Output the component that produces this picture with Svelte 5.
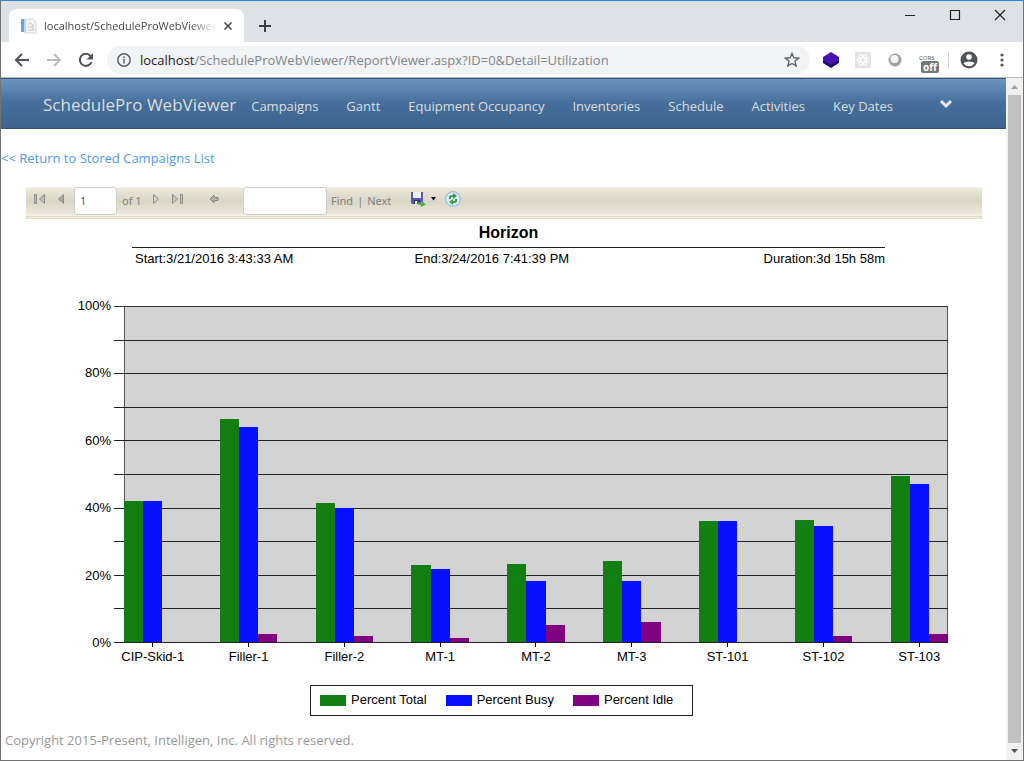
<script>
  let url = 'localhost/ScheduleProWebViewer/ReportViewer.aspx?ID=0&Detail=Utilization';
  let page = '1';
  let search = '';

  const links = [
    'Campaigns',
    'Gantt',
    'Equipment Occupancy',
    'Inventories',
    'Schedule',
    'Activities',
    'Key Dates'
  ];

  const series = [
    { name: 'Percent Total', key: 'total' },
    { name: 'Percent Busy', key: 'busy' },
    { name: 'Percent Idle', key: 'idle' }
  ];

  const equipment = [
    { name: 'CIP-Skid-1', total: 42, busy: 42, idle: 0 },
    { name: 'Filler-1', total: 66.3, busy: 64, idle: 2.4 },
    { name: 'Filler-2', total: 41.5, busy: 40, idle: 1.8 },
    { name: 'MT-1', total: 22.8, busy: 21.6, idle: 1.2 },
    { name: 'MT-2', total: 23.2, busy: 18.2, idle: 5 },
    { name: 'MT-3', total: 24, busy: 18.2, idle: 6 },
    { name: 'ST-101', total: 36, busy: 36, idle: 0 },
    { name: 'ST-102', total: 36.3, busy: 34.5, idle: 1.8 },
    { name: 'ST-103', total: 49.4, busy: 47, idle: 2.4 }
  ];

  const scale = [100, 80, 60, 40, 20, 0];
  const gridRows = Array(10);

  $: host = url.split('/')[0];
  $: path = url.slice(host.length);
</script>

<div class="window">
  <header class="tabs">
    <div class="tab">
      <svg width="16" height="16" viewBox="0 0 16 16">
        <path d="M4 1h8l3 3v11H4z" fill="#f1f2f4" stroke="#d5d8dc" />
        <path d="M0 1h4v13H0z" fill="#6aa5d6" />
        <path d="M3 1h2v13H3z" fill="#b9d6ec" />
        <path d="M7 7l2-2 3 2v5M7 9h5M7 12h6" fill="none" stroke="#c3c8ce" />
      </svg>
      <span class="title">localhost/ScheduleProWebViewer</span>
      <button aria-label="Close tab">
        <svg width="10" height="10" viewBox="0 0 10 10">
          <path d="M1.5 1.5l7 7M8.5 1.5l-7 7" stroke="#45494d" stroke-width="1.6" />
        </svg>
      </button>
    </div>
    <button class="new-tab" aria-label="New tab">
      <svg width="14" height="14" viewBox="0 0 14 14">
        <path d="M7 1v12M1 7h12" stroke="#3c4043" stroke-width="2" />
      </svg>
    </button>
    <div class="controls">
      <button aria-label="Minimize">
        <svg width="12" height="12" viewBox="0 0 12 12"><path d="M1 6.5h10" stroke="#222" /></svg>
      </button>
      <button aria-label="Maximize">
        <svg width="12" height="12" viewBox="0 0 12 12">
          <path d="M1.5 1.5h9v9h-9z" fill="none" stroke="#222" stroke-width="1.2" />
        </svg>
      </button>
      <button aria-label="Close">
        <svg width="12" height="12" viewBox="0 0 12 12">
          <path d="M1 1l10 10M11 1L1 11" stroke="#222" stroke-width="1.2" />
        </svg>
      </button>
    </div>
  </header>

  <div class="address">
    <div class="history">
      <button aria-label="Back">
        <svg width="16" height="16" viewBox="0 0 16 16">
          <path d="M15 8H2M8 2L2 8l6 6" fill="none" stroke="#50545a" stroke-width="2" />
        </svg>
      </button>
      <button aria-label="Forward">
        <svg width="16" height="16" viewBox="0 0 16 16">
          <path d="M1 8h13M8 2l6 6-6 6" fill="none" stroke="#babcbe" stroke-width="2" />
        </svg>
      </button>
      <button aria-label="Reload">
        <svg width="16" height="16" viewBox="0 0 16 16">
          <path d="M13.5 10A6 6 0 1 1 12.500 4" fill="none" stroke="#50545a" stroke-width="2" />
          <path d="M15 1v6.500H8.500z" fill="#50545a" />
        </svg>
      </button>
    </div>
    <div class="omnibox">
      <svg width="16" height="16" viewBox="0 0 16 16">
        <circle cx="8" cy="8" r="6.200" fill="none" stroke="#5f6368" stroke-width="1.5" />
        <path d="M8 7v4.500M8 4.300v1.700" stroke="#5f6368" stroke-width="1.5" />
      </svg>
      <span class="url"><b>{host}</b>{path}</span>
      <button aria-label="Bookmark this page">
        <svg width="16" height="16" viewBox="0 0 16 16">
          <path
            d="M8 1.500l1.900 4.300 4.700.4-3.600 3.100 1.100 4.600L8 11.500l-4.100 2.400 1.100-4.600L1.400 6.200l4.700-.4z"
            fill="none"
            stroke="#5f6368"
            stroke-width="1.4"
          />
        </svg>
      </button>
    </div>
    <div class="extensions">
      <svg width="16" height="16" viewBox="0 0 16 16">
        <path d="M0 7v4l8 5 8-5V7z" fill="#1d0a72" />
        <path d="M8 0l8 5v3l-8 5-8-5V5z" fill="#4712b0" />
      </svg>
      <svg width="16" height="16" viewBox="0 0 16 16">
        <path d="M0 0h16v16H0z" fill="#e4e4e4" />
        <g fill="none" stroke="#fff">
          <ellipse cx="8" cy="8" rx="6" ry="2.3" />
          <ellipse cx="8" cy="8" rx="6" ry="2.3" transform="rotate(60 8 8)" />
          <ellipse cx="8" cy="8" rx="6" ry="2.3" transform="rotate(120 8 8)" />
        </g>
      </svg>
      <svg width="16" height="16" viewBox="0 0 16 16">
        <circle cx="8" cy="8" r="6.500" fill="#a2a2a2" />
        <path d="M2 10a6.500 6.500 0 0 1 9-8 7 7 0 0 0-9 8z" fill="#ccc" />
        <circle cx="7.500" cy="7" r="4" fill="#f4f4f4" />
      </svg>
      <div class="cors">
        <span>CORS</span>
        <b>off</b>
      </div>
      <i></i>
      <svg width="18" height="18" viewBox="0 0 18 18">
        <circle cx="9" cy="9" r="8.500" fill="#505458" />
        <circle cx="9" cy="6" r="2.800" fill="#fff" />
        <path d="M3.500 12.500C5 9.800 13 9.800 14.500 12.500a7 7 0 0 1-11 0z" fill="#fff" />
      </svg>
      <svg width="16" height="16" viewBox="0 0 16 16" fill="#505458">
        <circle cx="8" cy="3" r="1.600" />
        <circle cx="8" cy="8" r="1.600" />
        <circle cx="8" cy="13" r="1.600" />
      </svg>
    </div>
  </div>

  <div class="viewport">
    <main>
      <nav>
        <a class="brand" href="#home">SchedulePro WebViewer</a>
        {#each links as link}
          <a href="#{link}">{link}</a>
        {/each}
        <button aria-label="More">
          <svg width="14" height="10" viewBox="0 0 14 10">
            <path d="M2 2l5 5 5-5" fill="none" stroke="#e8e8e8" stroke-width="3" />
          </svg>
        </button>
      </nav>

      <a class="return" href="#campaigns">&lt;&lt; Return to Stored Campaigns List</a>

      <section class="report">
        <div class="toolbar">
          <div class="pager">
            <button aria-label="First page">
              <svg width="14" height="12" viewBox="0 0 14 12">
                <path d="M1.500 1.500h2v9h-2zM11.500 1.500v9L6.500 6z" fill="#bdbdb9" stroke="#8d8d89" />
              </svg>
            </button>
            <button aria-label="Previous page">
              <svg width="8" height="12" viewBox="0 0 8 12">
                <path d="M6.500 1.500v9L1.500 6z" fill="#a9a9a4" stroke="#8d8d89" />
              </svg>
            </button>
          </div>
          <input class="page" aria-label="Current page" bind:value={page} />
          <span class="count">of 1</span>
          <div class="pager">
            <button aria-label="Next page">
              <svg width="8" height="12" viewBox="0 0 8 12">
                <path d="M1.500 1.500v9L6.500 6z" fill="#d2d2ce" stroke="#8d8d89" />
              </svg>
            </button>
            <button aria-label="Last page">
              <svg width="14" height="12" viewBox="0 0 14 12">
                <path d="M10.500 1.500h2v9h-2zM2.500 1.500v9L7.500 6z" fill="#c4c4c0" stroke="#8d8d89" />
              </svg>
            </button>
          </div>
          <button class="parent" aria-label="Back to parent report">
            <svg width="10" height="12" viewBox="0 0 10 12">
              <path d="M1 6l4-4v2.500h4v3H5V10z" fill="#b4b4b0" stroke="#84847f" />
            </svg>
          </button>
          <input class="search" aria-label="Find text" bind:value={search} />
          <div class="find">
            <a href="#find">Find</a>
            <span>|</span>
            <a href="#next">Next</a>
          </div>
          <button class="export" aria-label="Export">
            <svg width="16" height="16" viewBox="0 0 16 16">
              <path d="M1 1h12v12H2l-1-1z" fill="#5556b8" />
              <path d="M3 1h8v6H3z" fill="#eef1fb" />
              <path d="M4 9h6v4H4z" fill="#30305c" />
              <path d="M5 10h2v3H5z" fill="#dfe3f2" />
              <path d="M7 9q1 3 4 2.500V9.500l5 4-5 2.500v-1.500Q7 14 7 9z" fill="#4fae50" />
            </svg>
            <svg width="5" height="4" viewBox="0 0 5 4"><path d="M0 0h5L2.500 3.500z" /></svg>
          </button>
          <button aria-label="Refresh">
            <svg width="16" height="16" viewBox="0 0 16 16">
              <circle cx="8" cy="8" r="7.300" fill="#dcebf9" stroke="#88b1dc" />
              <path d="M4 8V6q0-2 4-2V2l4 3-4 3V6H6v2z" fill="#35a03b" />
              <path d="M12 8v2q0 2-4 2v2l-4-3 4-3v2h2V8z" fill="#35a03b" />
            </svg>
          </button>
        </div>

        <div class="heading">
          <h1>Horizon</h1>
          <div class="period">
            <span>Start:3/21/2016 3:43:33 AM</span>
            <span>End:3/24/2016 7:41:39 PM</span>
            <span>Duration:3d 15h 58m</span>
          </div>
        </div>

        <div class="chart">
          <div class="scale">
            {#each scale as value}
              <span>{value}%</span>
            {/each}
          </div>
          <div class="plot"></div>
          <div class="lines">
            {#each gridRows as _}
              <div></div>
            {/each}
          </div>
          <div class="groups">
            {#each equipment as item}
              <div class="bars">
                {#each series as s}
                  <div class={s.key} style="height: {item[s.key]}%"></div>
                {/each}
              </div>
            {/each}
          </div>
          <div class="names">
            {#each equipment as item}
              <span>{item.name}</span>
            {/each}
          </div>
        </div>

        <div class="legend">
          {#each series as s}
            <span><i class={s.key}></i>{s.name}</span>
          {/each}
        </div>
      </section>

      <footer>Copyright 2015-Present, Intelligen, Inc. All rights reserved.</footer>
    </main>

    <div class="scrollbar">
      <svg width="17" height="17" viewBox="0 0 17 17"><path d="M5 11h7L8.500 7z" fill="#9b9b9b" /></svg>
      <div class="thumb"></div>
      <svg width="17" height="17" viewBox="0 0 17 17"><path d="M5 6h7l-3.500 4z" fill="#505050" /></svg>
    </div>
  </div>
</div>

<style>
  :global(body) {
    margin: 0;
  }

  .window {
    display: flex;
    flex-direction: column;
    box-sizing: border-box;
    min-height: 100vh;
    border: 1px solid #737373;
    border-top-color: #2c86d3;
    background: #fff;
    font: 13px/18px 'Open Sans', 'Noto Sans', sans-serif;
  }

  button {
    display: flex;
    align-items: center;
    padding: 0;
    border: 0;
    background: none;
    cursor: pointer;
  }

  svg {
    display: block;
    flex: none;
  }

  a {
    text-decoration: none;
  }

  /* browser frame */
  .tabs {
    display: flex;
    align-items: center;
    height: 41px;
    padding-left: 8px;
    background: #dee1e6;
  }

  .tab {
    display: flex;
    align-items: center;
    align-self: flex-end;
    gap: 7px;
    box-sizing: border-box;
    width: 235px;
    height: 33px;
    padding: 0 11px 0 12px;
    border-radius: 8px 8px 0 0;
    background: #fff;
  }

  .title {
    flex: 1;
    color: #45494d;
    font-size: 11px;
    white-space: nowrap;
    mask-image: linear-gradient(to right, #000 85%, transparent);
  }

  .new-tab {
    margin: 8px 0 0 14px;
  }

  .controls {
    display: flex;
    gap: 33px;
    margin: 0 17px 14px auto;
  }

  .address {
    display: flex;
    align-items: center;
    height: 35px;
    border-bottom: 1px solid #b8bcc1;
  }

  .history {
    display: flex;
    gap: 16px;
    padding: 0 13px;
  }

  .omnibox {
    display: flex;
    flex: 1;
    align-items: center;
    box-sizing: border-box;
    min-width: 0;
    height: 28px;
    padding: 0 10px 0 9px;
    border-radius: 14px;
    background: #f1f3f4;
  }

  .url {
    flex: 1;
    margin-left: 8px;
    color: #80868b;
    white-space: nowrap;
  }

  .url b {
    color: #202124;
    font-weight: normal;
  }

  .extensions {
    display: flex;
    align-items: center;
    gap: 16px;
    padding: 0 13px;
  }

  .extensions i {
    width: 1px;
    height: 16px;
    margin: 0 -5px 0 -7px;
    background: #d5d7da;
  }

  .cors {
    display: flex;
    flex-direction: column;
    align-items: flex-end;
    width: 20px;
    margin-top: 8px;
  }

  .cors span {
    align-self: flex-start;
    color: #555;
    font-size: 6px;
    line-height: 6px;
  }

  .cors b {
    padding: 0 2px;
    border-radius: 2px;
    background: #777;
    color: #fff;
    font-size: 10px;
    line-height: 12px;
  }

  .viewport {
    display: flex;
    flex: 1;
  }

  main {
    display: flex;
    flex: 1;
    flex-direction: column;
    min-width: 0;
  }

  .scrollbar {
    display: flex;
    flex-direction: column;
    width: 17px;
    background: #f1f1f1;
  }

  .thumb {
    flex: 1;
    margin: 0 2px;
    background: #c1c1c1;
  }

  /* site navigation */
  nav {
    display: flex;
    align-items: center;
    gap: 28px;
    height: 49px;
    padding: 0 42px;
    border: solid #345578;
    border-width: 1px 0;
    background: linear-gradient(#6d94bf, #446e9b 50%, #3e648d);
  }

  nav a {
    padding-top: 4px;
    color: #ddd;
    white-space: nowrap;
  }

  nav .brand {
    margin-right: -13px;
    padding-top: 2px;
    font-size: 17px;
  }

  nav button {
    margin-left: 18px;
  }

  .return {
    align-self: flex-start;
    margin: 20px 0;
    color: #4c9cf0;
  }

  .report {
    margin: 0 24px 0 25px;
    font-family: 'Liberation Sans', Arial, sans-serif;
    line-height: 16px;
  }

  .toolbar {
    display: flex;
    height: 29px;
    padding-left: 7px;
    border-bottom: 3px double #dddccf;
    background: linear-gradient(#f6f3e6, #e8e5d6 10%, #dad7c6 50%, #e9e6d8 88%, #f7f4e8);
    color: #808080;
    font: 11px/28px 'Noto Sans', 'Open Sans', sans-serif;
  }

  .toolbar button {
    height: 24px;
  }

  .toolbar input {
    box-sizing: border-box;
    height: 28px;
    padding: 0 5px;
    border: 1px solid #ccc;
    border-radius: 3px;
    background: #fff;
    color: #555;
    font: inherit;
  }

  .toolbar a {
    color: inherit;
  }

  .pager {
    display: flex;
    gap: 10px;
    width: 41px;
  }

  .page {
    width: 43px;
  }

  .count {
    width: 30px;
    padding-left: 5px;
  }

  .parent {
    margin: 0 24px 0 16px;
  }

  .search {
    width: 84px;
  }

  .find {
    display: flex;
    gap: 4px;
    margin: 0 19px 0 4px;
  }

  .export {
    gap: 5px;
    margin-right: 9px;
  }

  .heading {
    margin: 4px 97px 39px 106px;
  }

  h1 {
    margin: 0;
    padding-bottom: 5px;
    border-bottom: 1px solid #222;
    font-size: 16px;
    line-height: 19px;
    text-align: center;
  }

  .period {
    display: grid;
    grid-template-columns: 37% 1fr auto;
    column-gap: 2px;
    padding: 3px 0 0 3px;
    white-space: nowrap;
  }

  .chart {
    display: grid;
    grid-template: 337px 31px / 88px 10px 1fr;
    margin-right: 34px;
  }

  .scale,
  .plot,
  .lines,
  .groups {
    grid-row: 1;
  }

  .scale {
    display: flex;
    flex-direction: column;
    justify-content: space-between;
    margin: -8px 3px -8px 0;
    text-align: right;
  }

  .plot,
  .groups,
  .names {
    grid-column: 3;
  }

  .plot {
    border: 1px solid #555;
    background: #d3d3d3;
  }

  .lines {
    display: flex;
    flex-direction: column;
    grid-column: 2 / 4;
    border-top: 1px solid #333;
  }

  .lines div {
    flex: 1;
    border-bottom: 1px solid #222;
  }

  .groups,
  .names {
    display: flex;
    justify-content: space-between;
  }

  .groups {
    margin-bottom: 1px;
  }

  /* each group is three bars wide, with two bar widths between groups */
  .bars,
  .names span {
    display: flex;
    width: calc(300% / 43);
  }

  .bars {
    align-items: flex-end;
  }

  .bars div {
    flex: 1;
  }

  .total {
    background: #118011;
  }

  .busy {
    background: #0510ff;
  }

  .idle {
    background: #800080;
  }

  .names span {
    flex-direction: column;
    align-items: center;
    white-space: nowrap;
  }

  .names span::before {
    width: 1px;
    height: 4px;
    margin-bottom: 2px;
    background: #000;
    content: '';
  }

  .legend {
    display: flex;
    gap: 19px;
    width: max-content;
    margin: 11px auto 0 284px;
    padding: 6px 19px 7px 9px;
    border: 1px solid #222;
  }

  .legend span {
    display: flex;
    align-items: center;
    gap: 5px;
  }

  .legend i {
    width: 26px;
    height: 11px;
  }

  footer {
    padding: 15px 4px 10px;
    color: #999;
  }
</style>
